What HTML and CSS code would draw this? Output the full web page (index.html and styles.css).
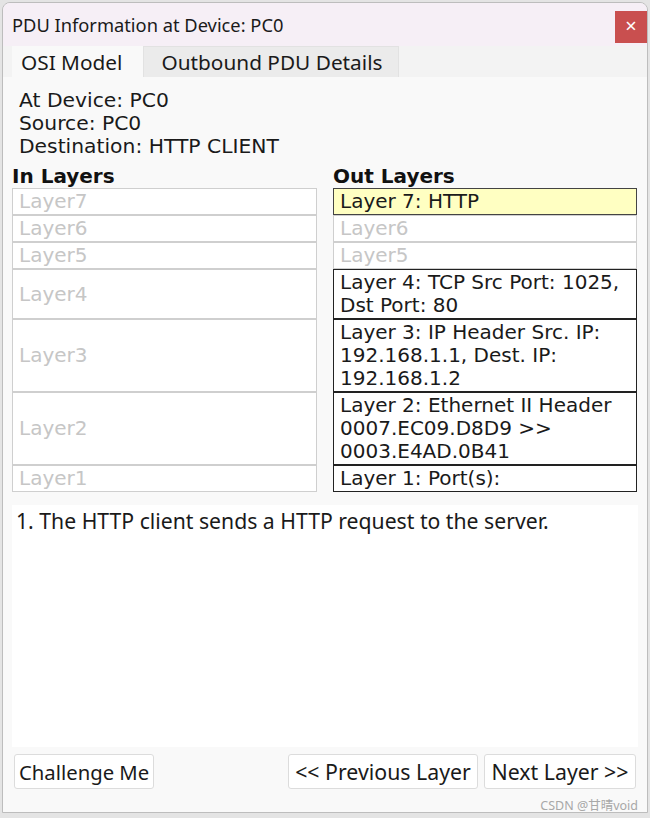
FILE: index.html
```html
<!DOCTYPE html>
<html lang="en">
<head>
    <meta charset="UTF-8">
    <title>PDU Information at Device: PC0</title>
    <link rel="stylesheet" href="styles.css">
</head>
<body>
    <div class="window">
        <div class="titlebar">
            <span class="title">PDU Information at Device: PC0</span>
            <span class="close">&times;</span>
        </div>
        <div class="tabs">
            <div class="tab active">OSI Model</div>
            <div class="tab">Outbound PDU Details</div>
        </div>
        <div class="panel">
            <div class="info">
                <div>At Device: PC0</div>
                <div>Source: PC0</div>
                <div>Destination: HTTP CLIENT</div>
            </div>
            <div class="layers">
                <div class="heading">In Layers</div>
                <div class="heading">Out Layers</div>

                <div class="cell off">Layer7</div>
                <div class="cell current">Layer 7: HTTP</div>

                <div class="cell off">Layer6</div>
                <div class="cell off">Layer6</div>

                <div class="cell off">Layer5</div>
                <div class="cell off">Layer5</div>

                <div class="cell off">Layer4</div>
                <div class="cell on">Layer 4: TCP Src Port: 1025,<br>Dst Port: 80</div>

                <div class="cell off">Layer3</div>
                <div class="cell on">Layer 3: IP Header Src. IP:<br>192.168.1.1, Dest. IP:<br>192.168.1.2</div>

                <div class="cell off">Layer2</div>
                <div class="cell on">Layer 2: Ethernet II Header<br>0007.EC09.D8D9 &gt;&gt;<br>0003.E4AD.0B41</div>

                <div class="cell off">Layer1</div>
                <div class="cell on">Layer 1: Port(s):</div>
            </div>
            <div class="description">1. The HTTP client sends a HTTP request to the server.</div>
            <div class="buttons">
                <button class="btn">Challenge Me</button>
                <div class="nav">
                    <button class="btn prev">&lt;&lt; Previous Layer</button>
                    <button class="btn next">Next Layer &gt;&gt;</button>
                </div>
            </div>
            <div class="watermark">CSDN @甘晴void</div>
        </div>
    </div>
</body>
</html>
```

FILE: styles.css
```css
body {
    margin: 0;
    background-color: #e4e4e4;
    font-family: "Noto Sans", "Noto Sans CJK SC", sans-serif;
    color: #1a1a1a;
}

.window {
    width: 646px;
    height: 811px;
    margin: 2px 0 0 2px;
    box-sizing: border-box;
    border: 1px solid #bdbdbd;
    border-radius: 8px 8px 0 0;
    background-color: #f3f3f3;
    overflow: hidden;
    display: flex;
    flex-direction: column;
}

.titlebar {
    height: 43px;
    flex-shrink: 0;
    background-color: #f6eff6;
    display: flex;
    justify-content: space-between;
    padding-left: 9px;
}

.title {
    font-size: 18.3px;
    line-height: 43px;
}

.close {
    width: 32px;
    height: 32px;
    margin-top: 8px;
    background-color: #c94f4f;
    color: #fff;
    font-size: 20px;
    line-height: 30px;
    text-align: center;
}

.tabs {
    display: flex;
    height: 31px;
    padding-left: 9px;
    flex-shrink: 0;
}

.tab {
    font-size: 20.8px;
    line-height: 31px;
    padding: 0 16px 0 17px;
    background-color: #ebebeb;
    border: 1px solid #e2e2e2;
    border-bottom: none;
}

.tab.active {
    background-color: #f9f9f9;
    padding: 0 20px 0 8px;
    border-color: #f9f9f9;
}

.panel {
    flex: 1;
    background-color: #f9f9f9;
    padding: 12px 9px 0 9px;
    display: flex;
    flex-direction: column;
}

.info {
    font-family: "DejaVu Sans", Verdana, sans-serif;
    font-size: 20.3px;
    line-height: 23px;
    padding-left: 7px;
}

.layers {
    display: grid;
    grid-template-columns: 305px 304px;
    column-gap: 16px;
    margin-top: 7px;
    font-family: "DejaVu Sans", Verdana, sans-serif;
    font-size: 20px;
}

.heading {
    font-weight: bold;
    line-height: 23px;
    color: #111;
}

.cell {
    border: 1px solid #cfcfcf;
    background-color: #fff;
    padding: 1px 6px;
    line-height: 23px;
    display: flex;
    align-items: center;
    white-space: nowrap;
}

.cell.off {
    color: #c6c6c6;
}

.cell.on {
    border-color: #222;
    color: #1a1a1a;
}

.cell.current {
    border-color: #444;
    background-color: #ffffc2;
    color: #1a1a1a;
}

.description {
    margin-top: 13px;
    height: 242px;
    background-color: #fff;
    padding: 4px 4px 0;
    font-size: 21.2px;
    line-height: 23px;
    box-sizing: border-box;
}

.buttons {
    display: flex;
    justify-content: space-between;
    margin-top: 7px;
    padding: 0 2px;
}

.nav {
    display: flex;
    gap: 6px;
}

.btn {
    font-family: "Noto Sans", sans-serif;
    font-size: 20.3px;
    color: #1a1a1a;
    height: 35px;
    padding: 0 4px;
    background-color: #fff;
    border: 1px solid #dcdcdc;
    border-radius: 3px;
    white-space: nowrap;
}

.btn.prev {
    width: 190px;
    font-size: 21.3px;
}

.btn.next {
    width: 152px;
    font-size: 21.3px;
}

.watermark {
    text-align: right;
    font-size: 12.5px;
    color: #a8a8a8;
    margin-top: 6px;
}
```
